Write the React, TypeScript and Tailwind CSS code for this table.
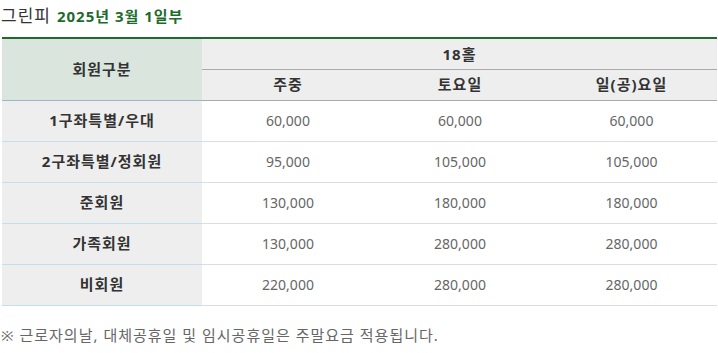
const font = { fontFamily: '"Noto Sans", "Noto Sans CJK KR", sans-serif' };

const rows = [
  { name: "1구좌특별/우대", prices: ["60,000", "60,000", "60,000"] },
  { name: "2구좌특별/정회원", prices: ["95,000", "105,000", "105,000"] },
  { name: "준회원", prices: ["130,000", "180,000", "180,000"] },
  { name: "가족회원", prices: ["130,000", "280,000", "280,000"] },
  { name: "비회원", prices: ["220,000", "280,000", "280,000"] },
];

export default function App() {
  return (
    <div className="w-[718px] h-[353px] bg-white pl-[2px] pt-[3px]" style={font}>
      <h3 className="flex items-baseline gap-[6px] h-[24px] text-[17px] tracking-[1px] text-[#333] -ml-[1px]">
        그린피
        <span className="text-[15px] font-bold text-[#1c6b2b]">2025년 3월 1일부</span>
      </h3>
      <table className="mt-[10px] w-[715px] border-collapse border-t-2 border-[#1e6b2c] text-[15px] tracking-[1px] text-center">
        <thead>
          <tr className="h-[31px]">
            <th
              rowSpan={2}
              className="w-[200px] bg-[#dae5dd] font-bold text-[#333] border-b border-[#9ab8c8]"
            >
              회원구분
            </th>
            <th colSpan={3} className="bg-[#eeeeee] font-bold text-[#333] border-b border-[#aaaaaa]">
              18홀
            </th>
          </tr>
          <tr className="h-[31px]">
            <th className="w-[172px] bg-[#eeeeee] font-bold text-[#333] border-b border-[#aaaaaa]">주중</th>
            <th className="w-[172px] bg-[#eeeeee] font-bold text-[#333] border-b border-[#aaaaaa]">토요일</th>
            <th className="bg-[#eeeeee] font-bold text-[#333] border-b border-[#aaaaaa]">일(공)요일</th>
          </tr>
        </thead>
        <tbody>
          {rows.map((r) => (
            <tr key={r.name} className="h-[41px]">
              <td className="bg-[#eeeeee] font-bold text-[#333] border-b border-[#c2dfee]">{r.name}</td>
              {r.prices.map((p, i) => (
                <td key={i} className="text-[14px] tracking-normal text-[#666] border-b border-[#dddddd]">
                  {p}
                </td>
              ))}
            </tr>
          ))}
        </tbody>
      </table>
      <p className="mt-[18px] text-[15px] tracking-[1px] text-[#666] -ml-[1px]">
        ※ 근로자의날, 대체공휴일 및 임시공휴일은 주말요금 적용됩니다.
      </p>
    </div>
  );
}
